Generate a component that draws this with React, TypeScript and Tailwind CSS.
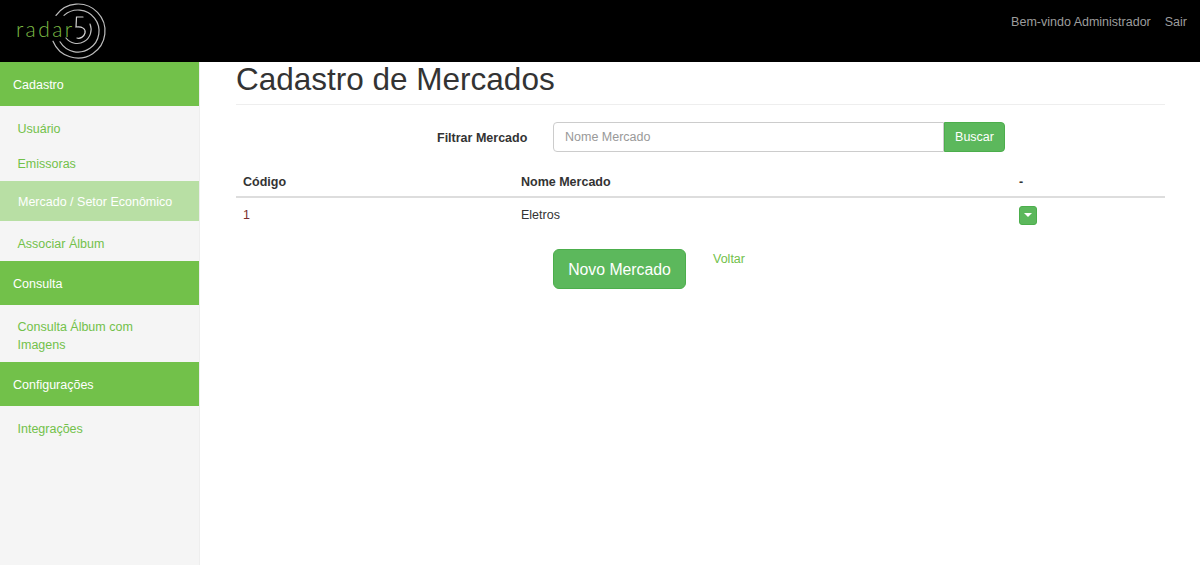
const font = "font-['Liberation_Sans',Arial,sans-serif]";

function Logo() {
  return (
    <div className="relative w-[115px] h-[62px]">
      <span className="absolute left-[16px] top-[15px] text-[#7dbb45] text-[21px] leading-[28px] font-['Lato',sans-serif] font-light tracking-[2.4px]">radar</span>
      <svg className="absolute left-0 top-0" width="115" height="62" viewBox="0 0 115 62" fill="none">
        <g stroke="#bdbdbd" strokeWidth="1.2" strokeLinecap="round">
          <path d="M56 15.4 A27 27 0 1 1 53 41.2" />
          <path d="M64 15.4 A21 21 0 1 1 60 41.8" />
          <path d="M90 24 A14 14 0 0 1 66 38" />
          <path d="M83 17 H76.5 L76 27 C82 26 86 29 85 33 C84 37 80 39 77 38" stroke="#d4d4d4" />
        </g>
      </svg>
    </div>
  );
}

function GroupHeader({ children }: { children: string }) {
  return <div className="h-[44px] bg-[#72c14a] text-white text-[12.5px] pl-[13px] pt-[2px] flex items-center">{children}</div>;
}

function Item({ children, className = "h-[35px] pt-[1px]" }: { children: string; className?: string }) {
  return <a className={`flex items-center pl-[17.5px] text-[#72c14a] text-[12.5px] ${className}`}>{children}</a>;
}

export default function App() {
  return (
    <div className={`${font} w-[1200px] h-[565px] overflow-hidden bg-white flex flex-col text-[12.5px] text-[#333]`}>
      <header className="h-[62px] shrink-0 bg-black flex items-center justify-between pr-[13px]">
        <Logo />
        <div className="flex gap-[14px] text-[#9d9d9d] text-[12.5px] -mt-[17px]">
          <span>Bem-vindo Administrador</span>
          <span>Sair</span>
        </div>
      </header>
      <div className="flex flex-1 min-h-0">
        <aside className="w-[200px] shrink-0 bg-[#f5f5f5] border-r border-[#eeeeee]">
          <GroupHeader>Cadastro</GroupHeader>
          <div className="pt-[5px] flex flex-col">
            <Item>Usuário</Item>
            <Item>Emissoras</Item>
            <a className="h-[40px] flex items-center pl-[18px] pt-[2px] bg-[#b8dfa4] text-white text-[12.5px]">Mercado / Setor Econômico</a>
            <Item className="h-[36px] mt-[4px] pt-[2px]">Associar Álbum</Item>
          </div>
          <GroupHeader>Consulta</GroupHeader>
          <div className="pt-[14px] pb-[8px] pl-[17.5px] pr-[40px] text-[#72c14a] text-[12.5px] leading-[17.5px]">
            Consulta Álbum com Imagens
          </div>
          <GroupHeader>Configurações</GroupHeader>
          <div className="pt-[5px]">
            <Item>Integrações</Item>
          </div>
        </aside>
        <main className="flex-1 pl-[36px] pr-[35px]">
          <div className="h-[43px] border-b border-[#eeeeee]">
            <h1 className="text-[31.5px] leading-[34px] text-[#333] font-normal">Cadastro de Mercados</h1>
          </div>
          <div className="mt-[17px] h-[30px] flex items-center">
            <label className="ml-[201px] w-[116px] pt-[2px] font-bold text-[12.5px] text-[#333]">Filtrar Mercado</label>
            <div className="w-[391px] h-[30px] border border-[#ccc] rounded-l-[4px] bg-white pl-[11px] pt-[1px] flex items-center text-[#999] text-[12.5px]">Nome Mercado</div>
            <button className="w-[61px] h-[30px] bg-[#5cb85c] border border-[#4cae4c] rounded-r-[4px] text-white text-[12.5px]">Buscar</button>
          </div>
          <div className="mt-[14px] h-[32px] pt-[2px] grid grid-cols-[285px_498px_1fr] items-center border-b-2 border-[#ddd] font-bold text-[12.5px] text-[#333]">
            <span className="pl-[7px]">Código</span>
            <span>Nome Mercado</span>
            <span>-</span>
          </div>
          <div className="h-[34px] grid grid-cols-[285px_498px_1fr] items-center text-[12.5px] text-[#333]">
            <span className="pl-[7px] text-[#7a2e2e]">1</span>
            <span>Eletros</span>
            <button className="w-[18px] h-[19px] bg-[#5cb85c] border border-[#4cae4c] rounded-[3px] flex items-center justify-center">
              <span className="w-0 h-0 border-l-[4px] border-r-[4px] border-t-[4px] border-l-transparent border-r-transparent border-t-white" />
            </button>
          </div>
          <div className="mt-[17px] flex items-start">
            <button className="ml-[317px] w-[133px] h-[40px] pt-[1px] bg-[#5cb85c] border border-[#4cae4c] rounded-[6px] text-white text-[15.8px]">Novo Mercado</button>
            <a className="ml-[27px] pt-[1px] text-[#72c14a] text-[12.5px] leading-[18px]">Voltar</a>
          </div>
        </main>
      </div>
    </div>
  );
}
